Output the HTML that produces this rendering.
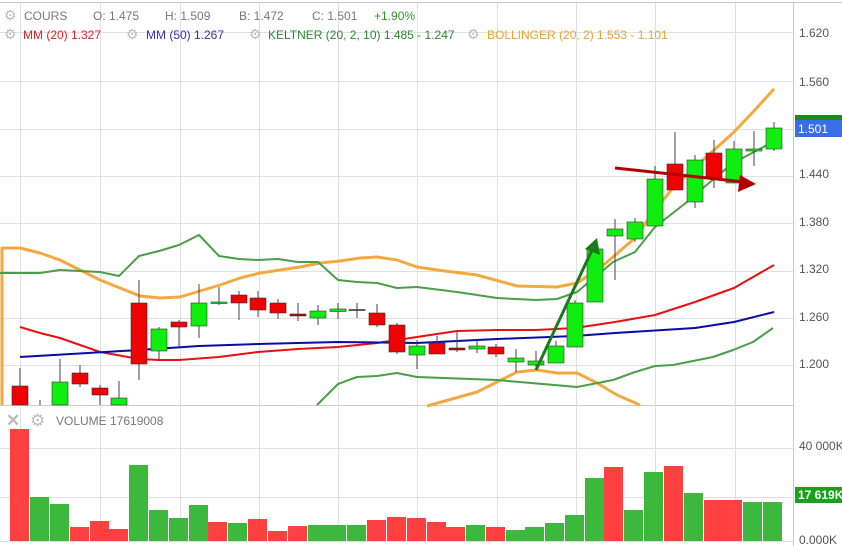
<!DOCTYPE html>
<html><head><meta charset="utf-8"><style>
html,body{margin:0;padding:0;background:#fff;width:842px;height:546px;overflow:hidden;font-family:"Liberation Sans",sans-serif}
svg{display:block}
text{font-family:"Liberation Sans",sans-serif}
</style></head><body>
<svg width="842" height="546" viewBox="0 0 842 546" xmlns="http://www.w3.org/2000/svg">
<rect width="842" height="546" fill="#fff"/>
<line x1="0" y1="2.5" x2="842" y2="2.5" stroke="#ccc"/>
<line x1="793.5" y1="2" x2="793.5" y2="546" stroke="#ccc"/>
<line x1="0" y1="405.5" x2="793" y2="405.5" stroke="#ccc"/>
<line x1="0" y1="541.5" x2="793" y2="541.5" stroke="#ddd"/>
<g stroke="#e0e0e0" stroke-width="1">
<line x1="20.5" y1="3" x2="20.5" y2="541"/><line x1="100.5" y1="3" x2="100.5" y2="541"/><line x1="180.5" y1="3" x2="180.5" y2="541"/><line x1="259.5" y1="3" x2="259.5" y2="541"/><line x1="338.5" y1="3" x2="338.5" y2="541"/><line x1="417.5" y1="3" x2="417.5" y2="541"/><line x1="497.5" y1="3" x2="497.5" y2="541"/><line x1="576.5" y1="3" x2="576.5" y2="541"/><line x1="655.5" y1="3" x2="655.5" y2="541"/><line x1="735.5" y1="3" x2="735.5" y2="541"/>
<line x1="0" y1="32.5" x2="793" y2="32.5"/><line x1="0" y1="81.5" x2="793" y2="81.5"/><line x1="0" y1="129.5" x2="793" y2="129.5"/><line x1="0" y1="176.5" x2="793" y2="176.5"/><line x1="0" y1="223.5" x2="793" y2="223.5"/><line x1="0" y1="271.5" x2="793" y2="271.5"/><line x1="0" y1="318.5" x2="793" y2="318.5"/><line x1="0" y1="365.5" x2="793" y2="365.5"/>
<line x1="0" y1="448.5" x2="793" y2="448.5"/><line x1="0" y1="497.5" x2="793" y2="497.5"/>
</g>
<g fill="none" stroke-linejoin="round">
<polyline stroke="#f4a940" stroke-width="3" points="2,405 2,248 20,248 40,253 60,260 80,270 100,280 120,288 140,296 160,298 180,297 200,291 220,285 240,278 260,273 280,270 300,267 320,263 340,261 360,258 377,257 397,260 417,267 437,270 477,275 517,286 557,287 577,283 600,268 613,257 635,238 655,210 673,188 703,160 733,133 753,112 774,89"/>
<polyline stroke="#f4a940" stroke-width="3" points="427,406 477,392 517,372 537,370 557,373 577,373 597,383 617,395 640,405"/>
<polyline stroke="#4a9e4a" stroke-width="2" points="0,273 40,273 60,270 100,272 119,276 139,256 159,251 179,245 199,235 219,256 239,259 258,260 278,259 298,262 318,262 338,280 357,282 377,283 397,288 417,287 457,292 497,298 536,300 557,299 577,292 600,273 613,262 635,252 655,227 687,202 703,188 733,163 773,142"/>
<polyline stroke="#4a9e4a" stroke-width="2" points="317,405 338,384 357,377 377,376 397,373 417,377 497,380 577,387 613,380 635,372 655,366 673,365 713,357 733,350 753,342 773,328"/>
<polyline stroke="#e81010" stroke-width="2" points="20,327 40,333 60,338 100,352 139,359 159,360 179,360 219,357 258,352 298,349 338,347 377,343 417,337 457,331 497,330 536,330 575,328 615,322 655,315 695,302 734,288 774,265"/>
<polyline stroke="#0a0aa8" stroke-width="2" points="20,357 139,350 199,346 258,344 338,342 417,343 497,339 575,336 615,333 695,328 734,322 774,312"/>
</g>
<g stroke="#444" stroke-width="1">
<line x1="20" y1="368" x2="20" y2="405"/><line x1="40" y1="400" x2="40" y2="405"/><line x1="60" y1="359" x2="60" y2="405"/><line x1="80" y1="365" x2="80" y2="387"/><line x1="100" y1="385" x2="100" y2="405"/><line x1="119" y1="381" x2="119" y2="405"/><line x1="139" y1="280" x2="139" y2="380"/><line x1="159" y1="327" x2="159" y2="360"/><line x1="179" y1="320" x2="179" y2="347"/><line x1="199" y1="284" x2="199" y2="338"/><line x1="219" y1="287" x2="219" y2="305"/><line x1="239" y1="291" x2="239" y2="320"/><line x1="258" y1="291" x2="258" y2="317"/><line x1="278" y1="299" x2="278" y2="319"/><line x1="298" y1="303" x2="298" y2="321"/><line x1="318" y1="305" x2="318" y2="325"/><line x1="338" y1="303" x2="338" y2="319"/><line x1="357" y1="303" x2="357" y2="318"/><line x1="377" y1="304" x2="377" y2="327"/><line x1="397" y1="323" x2="397" y2="354"/><line x1="417" y1="340" x2="417" y2="369"/><line x1="437" y1="336" x2="437" y2="354"/><line x1="457" y1="332" x2="457" y2="352"/><line x1="477" y1="340" x2="477" y2="353"/><line x1="496" y1="344" x2="496" y2="357"/><line x1="516" y1="349" x2="516" y2="372"/><line x1="536" y1="351" x2="536" y2="367"/><line x1="556" y1="341" x2="556" y2="363"/><line x1="575" y1="300" x2="575" y2="347"/><line x1="595" y1="246" x2="595" y2="302"/><line x1="615" y1="219" x2="615" y2="280"/><line x1="635" y1="218" x2="635" y2="242"/><line x1="655" y1="166" x2="655" y2="226"/><line x1="675" y1="132" x2="675" y2="190"/><line x1="695" y1="155" x2="695" y2="208"/><line x1="714" y1="140" x2="714" y2="188"/><line x1="734" y1="141" x2="734" y2="183"/><line x1="754" y1="131" x2="754" y2="166"/><line x1="774" y1="122" x2="774" y2="151"/>
</g>
<g stroke="#333" stroke-width="0.6">
<rect x="12" y="386" width="16" height="19" fill="#f00000"/>
<rect x="52" y="382" width="16" height="23" fill="#10ee10"/>
<rect x="72" y="373" width="16" height="11" fill="#f00000"/>
<rect x="92" y="388" width="16" height="7" fill="#f00000"/>
<rect x="111" y="398" width="16" height="7" fill="#10ee10"/>
<rect x="131" y="303" width="16" height="61" fill="#f00000"/>
<rect x="151" y="329" width="16" height="22" fill="#10ee10"/>
<rect x="171" y="322" width="16" height="5" fill="#f00000"/>
<rect x="191" y="303" width="16" height="23" fill="#10ee10"/>
<rect x="211" y="302" width="16" height="1.5" fill="#10ee10"/>
<rect x="231" y="295" width="16" height="8" fill="#f00000"/>
<rect x="250" y="298" width="16" height="12" fill="#f00000"/>
<rect x="270" y="303" width="16" height="10" fill="#f00000"/>
<rect x="290" y="314" width="16" height="2" fill="#c00000"/>
<rect x="310" y="311" width="16" height="7" fill="#10ee10"/>
<rect x="330" y="309" width="16" height="2.5" fill="#10ee10"/>
<rect x="349" y="309.5" width="16" height="1" fill="#444"/>
<rect x="369" y="313" width="16" height="12" fill="#f00000"/>
<rect x="389" y="325" width="16" height="27" fill="#f00000"/>
<rect x="409" y="346" width="16" height="9" fill="#10ee10"/>
<rect x="429" y="343" width="16" height="11" fill="#f00000"/>
<rect x="449" y="348" width="16" height="2" fill="#c00000"/>
<rect x="469" y="346" width="16" height="3" fill="#10ee10"/>
<rect x="488" y="347" width="16" height="7" fill="#f00000"/>
<rect x="508" y="358" width="16" height="4" fill="#10ee10"/>
<rect x="528" y="361" width="16" height="4" fill="#10ee10"/>
<rect x="548" y="346" width="16" height="17" fill="#10ee10"/>
<rect x="567" y="303" width="16" height="44" fill="#10ee10"/>
<rect x="587" y="249" width="16" height="53" fill="#10ee10"/>
<rect x="607" y="229" width="16" height="7" fill="#10ee10"/>
<rect x="627" y="222" width="16" height="17" fill="#10ee10"/>
<rect x="647" y="179" width="16" height="47" fill="#10ee10"/>
<rect x="667" y="164" width="16" height="26" fill="#f00000"/>
<rect x="687" y="160" width="16" height="42" fill="#10ee10"/>
<rect x="706" y="153" width="16" height="25" fill="#f00000"/>
<rect x="726" y="149" width="16" height="34" fill="#10ee10"/>
<rect x="746" y="149" width="16" height="2" fill="#10ee10"/>
<rect x="766" y="128" width="16" height="21" fill="#10ee10"/>
</g>
<line x1="536" y1="370" x2="592" y2="250" stroke="#1a7a1a" stroke-width="3"/>
<polygon points="597,238 585,249 600,255" fill="#1a7a1a"/>
<line x1="615" y1="168" x2="744" y2="182" stroke="#b00000" stroke-width="3"/>
<polygon points="756,184 740,175 738,192" fill="#b00000"/>
<g fill="#ff4040">
<rect x="10" y="429" width="19" height="112"/><rect x="70" y="527" width="19" height="14"/><rect x="90" y="521" width="19" height="20"/><rect x="109" y="529" width="19" height="12"/><rect x="208" y="522" width="19" height="19"/><rect x="248" y="519" width="19" height="22"/><rect x="268" y="531" width="19" height="10"/><rect x="288" y="526" width="19" height="15"/><rect x="367" y="520" width="19" height="21"/><rect x="387" y="517" width="19" height="24"/><rect x="407" y="518" width="19" height="23"/><rect x="427" y="522" width="19" height="19"/><rect x="446" y="527" width="19" height="14"/><rect x="486" y="527" width="19" height="14"/><rect x="604" y="467" width="19" height="74"/><rect x="664" y="466" width="19" height="75"/><rect x="704" y="500" width="19" height="41"/><rect x="723" y="500" width="19" height="41"/>
</g>
<g fill="#3cb93c">
<rect x="30" y="497" width="19" height="44"/><rect x="50" y="504" width="19" height="37"/><rect x="129" y="465" width="19" height="76"/><rect x="149" y="510" width="19" height="31"/><rect x="169" y="518" width="19" height="23"/><rect x="189" y="505" width="19" height="36"/><rect x="228" y="523" width="19" height="18"/><rect x="308" y="525" width="19" height="16"/><rect x="327" y="525" width="19" height="16"/><rect x="347" y="525" width="19" height="16"/><rect x="466" y="525" width="19" height="16"/><rect x="506" y="530" width="19" height="11"/><rect x="525" y="527" width="19" height="14"/><rect x="545" y="523" width="19" height="18"/><rect x="565" y="515" width="19" height="26"/><rect x="585" y="478" width="19" height="63"/><rect x="624" y="510" width="19" height="31"/><rect x="644" y="472" width="19" height="69"/><rect x="684" y="493" width="19" height="48"/><rect x="743" y="502" width="19" height="39"/><rect x="763" y="502" width="19" height="39"/>
</g>
<g font-size="12">
<text x="4" y="20" fill="#bbb" font-size="14">⚙</text>
<text x="24" y="20" fill="#777">COURS</text>
<text x="93" y="20" fill="#777">O: 1.475</text>
<text x="165" y="20" fill="#777">H: 1.509</text>
<text x="239" y="20" fill="#777">B: 1.472</text>
<text x="312" y="20" fill="#777">C: 1.501</text>
<text x="374" y="20" fill="#2a9a2a">+1.90%</text>
<text x="4" y="39" fill="#bbb" font-size="14">⚙</text>
<text x="23" y="39" fill="#e82020">MM (20) 1.327</text>
<text x="126" y="39" fill="#bbb" font-size="14">⚙</text>
<text x="146" y="39" fill="#3030b8">MM (50) 1.267</text>
<text x="249" y="39" fill="#bbb" font-size="14">⚙</text>
<text x="268" y="39" fill="#2a8a2a">KELTNER (20, 2, 10) 1.485 - 1.247</text>
<text x="467" y="39" fill="#bbb" font-size="14">⚙</text>
<text x="487" y="39" fill="#f0a030">BOLLINGER (20, 2) 1.553 - 1.101</text>
</g>
<text x="6" y="426" fill="#bbb" font-size="17" font-weight="bold">✕</text>
<text x="30" y="426" fill="#bbb" font-size="17">⚙</text>
<text x="56" y="425" fill="#777" font-size="12">VOLUME 17619008</text>
<g font-size="12" fill="#555">
<text x="799" y="37">1.620</text><text x="799" y="86">1.560</text><text x="799" y="178">1.440</text><text x="799" y="226">1.380</text><text x="799" y="273">1.320</text><text x="799" y="321">1.260</text><text x="799" y="368">1.200</text>
<text x="799" y="450">40 000K</text><text x="799" y="544">0.000K</text>
</g>
<rect x="795" y="115" width="47" height="8" fill="#1a8a1a"/>
<rect x="795" y="120" width="47" height="17" fill="#3a6ee8"/>
<text x="798" y="133" fill="#fff" font-size="12">1.501</text>
<rect x="795" y="487" width="47" height="16" fill="#1aa01a"/>
<text x="798" y="499" fill="#fff" font-size="12" font-weight="bold">17 619K</text>
</svg>
</body></html>
